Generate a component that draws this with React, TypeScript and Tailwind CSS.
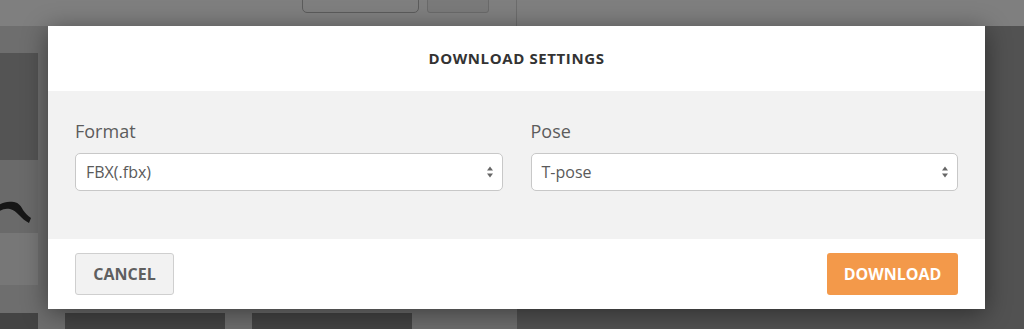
import React from "react";

const Arrows = () => (
  <svg width="8" height="14" viewBox="0 0 8 14" className="shrink-0">
    <path d="M4 1.5 L7 5.5 L1 5.5 Z" fill="#666" />
    <path d="M4 12.5 L7 8.5 L1 8.5 Z" fill="#666" />
  </svg>
);

const Field = ({ label, value }: { label: string; value: string }) => (
  <div className="flex-1 flex flex-col">
    <span className="text-[18px] leading-[22px] text-[#5c5c5c] mt-[29px]">{label}</span>
    <div className="mt-[11px] h-[38px] rounded-[5px] border border-[#c8c8c8] bg-white flex items-center justify-between pl-[10px] pr-[8px]">
      <span className="text-[16px] text-[#5a5a5a]">{value}</span>
      <Arrows />
    </div>
  </div>
);

const Card = ({ dark, figure }: { dark?: boolean; figure?: boolean }) => (
  <div className="w-[160px] shrink-0 flex flex-col">
    <div className={dark ? "h-[107px] bg-[#444]" : "h-[107px] bg-[#545454]"} />
    <div className="h-[73px] bg-[#6a6a6a] flex justify-end">
      {figure && (
        <svg width="40" height="73" viewBox="0 0 40 73" className="shrink-0">
          <path
            d="M0 46 C4 42 10 41 16 42 C21 43 23 46 25 50 C27 53 29 55 33 58 L31 63 C27 61 24 58 21 55 C18 52 16 50 12 49 C8 48 4 49 0 52 Z"
            fill="#161616"
          />
        </svg>
      )}
    </div>
    <div className="h-[52px] bg-[#777]" />
  </div>
);

export default function App() {
  return (
    <div
      className="w-[1024px] h-[329px] relative overflow-hidden bg-[#525252]"
      style={{ fontFamily: '"Open Sans", "Noto Sans", sans-serif' }}
    >
      {/* page behind overlay */}
      <div className="h-[26px] bg-[#7f7f7f] flex">
        <div className="w-[517px] flex items-start border-r border-[#6c6c6c]">
          <div className="ml-[302px] -mt-[20px] w-[117px] h-[33px] rounded-[5px] border border-[#5c5c5c]" />
          <div className="ml-[8px] -mt-[20px] w-[62px] h-[33px] rounded-[3px] border border-[#6a6a6a] bg-[#7a7a7a]" />
        </div>
      </div>
      <div className="flex h-[303px]">
        <div className="w-[517px] bg-[#6e6e6e] overflow-hidden">
          <div className="flex gap-[27px] -ml-[122px] pt-[27px]">
            <Card figure />
            <Card />
            <Card />
            <Card />
          </div>
          <div className="flex gap-[27px] -ml-[122px] pt-[28px]">
            <Card dark />
            <Card dark />
            <Card dark />
          </div>
        </div>
        <div className="flex-1 bg-[#525252]" />
      </div>

      {/* modal */}
      <div className="absolute left-[48px] top-[26px] w-[937px] bg-white shadow-[0_4px_24px_rgba(0,0,0,0.45)] flex flex-col">
        <div className="h-[65px] flex items-center justify-center">
          <span className="text-[15px] font-bold tracking-[0.6px] text-[#333]">DOWNLOAD SETTINGS</span>
        </div>
        <div className="h-[148px] bg-[#f2f2f2] flex gap-[28px] px-[27px]">
          <Field label="Format" value="FBX(.fbx)" />
          <Field label="Pose" value="T-pose" />
        </div>
        <div className="h-[70px] flex items-center justify-between px-[27px]">
          <button className="w-[99px] h-[42px] rounded-[3px] border border-[#cfcfcf] bg-[#f2f2f2] text-[16px] font-bold text-[#5f5f5f]">
            CANCEL
          </button>
          <button className="w-[131px] h-[42px] rounded-[3px] bg-[#f3994a] text-[16px] font-bold text-white">
            DOWNLOAD
          </button>
        </div>
      </div>
    </div>
  );
}
